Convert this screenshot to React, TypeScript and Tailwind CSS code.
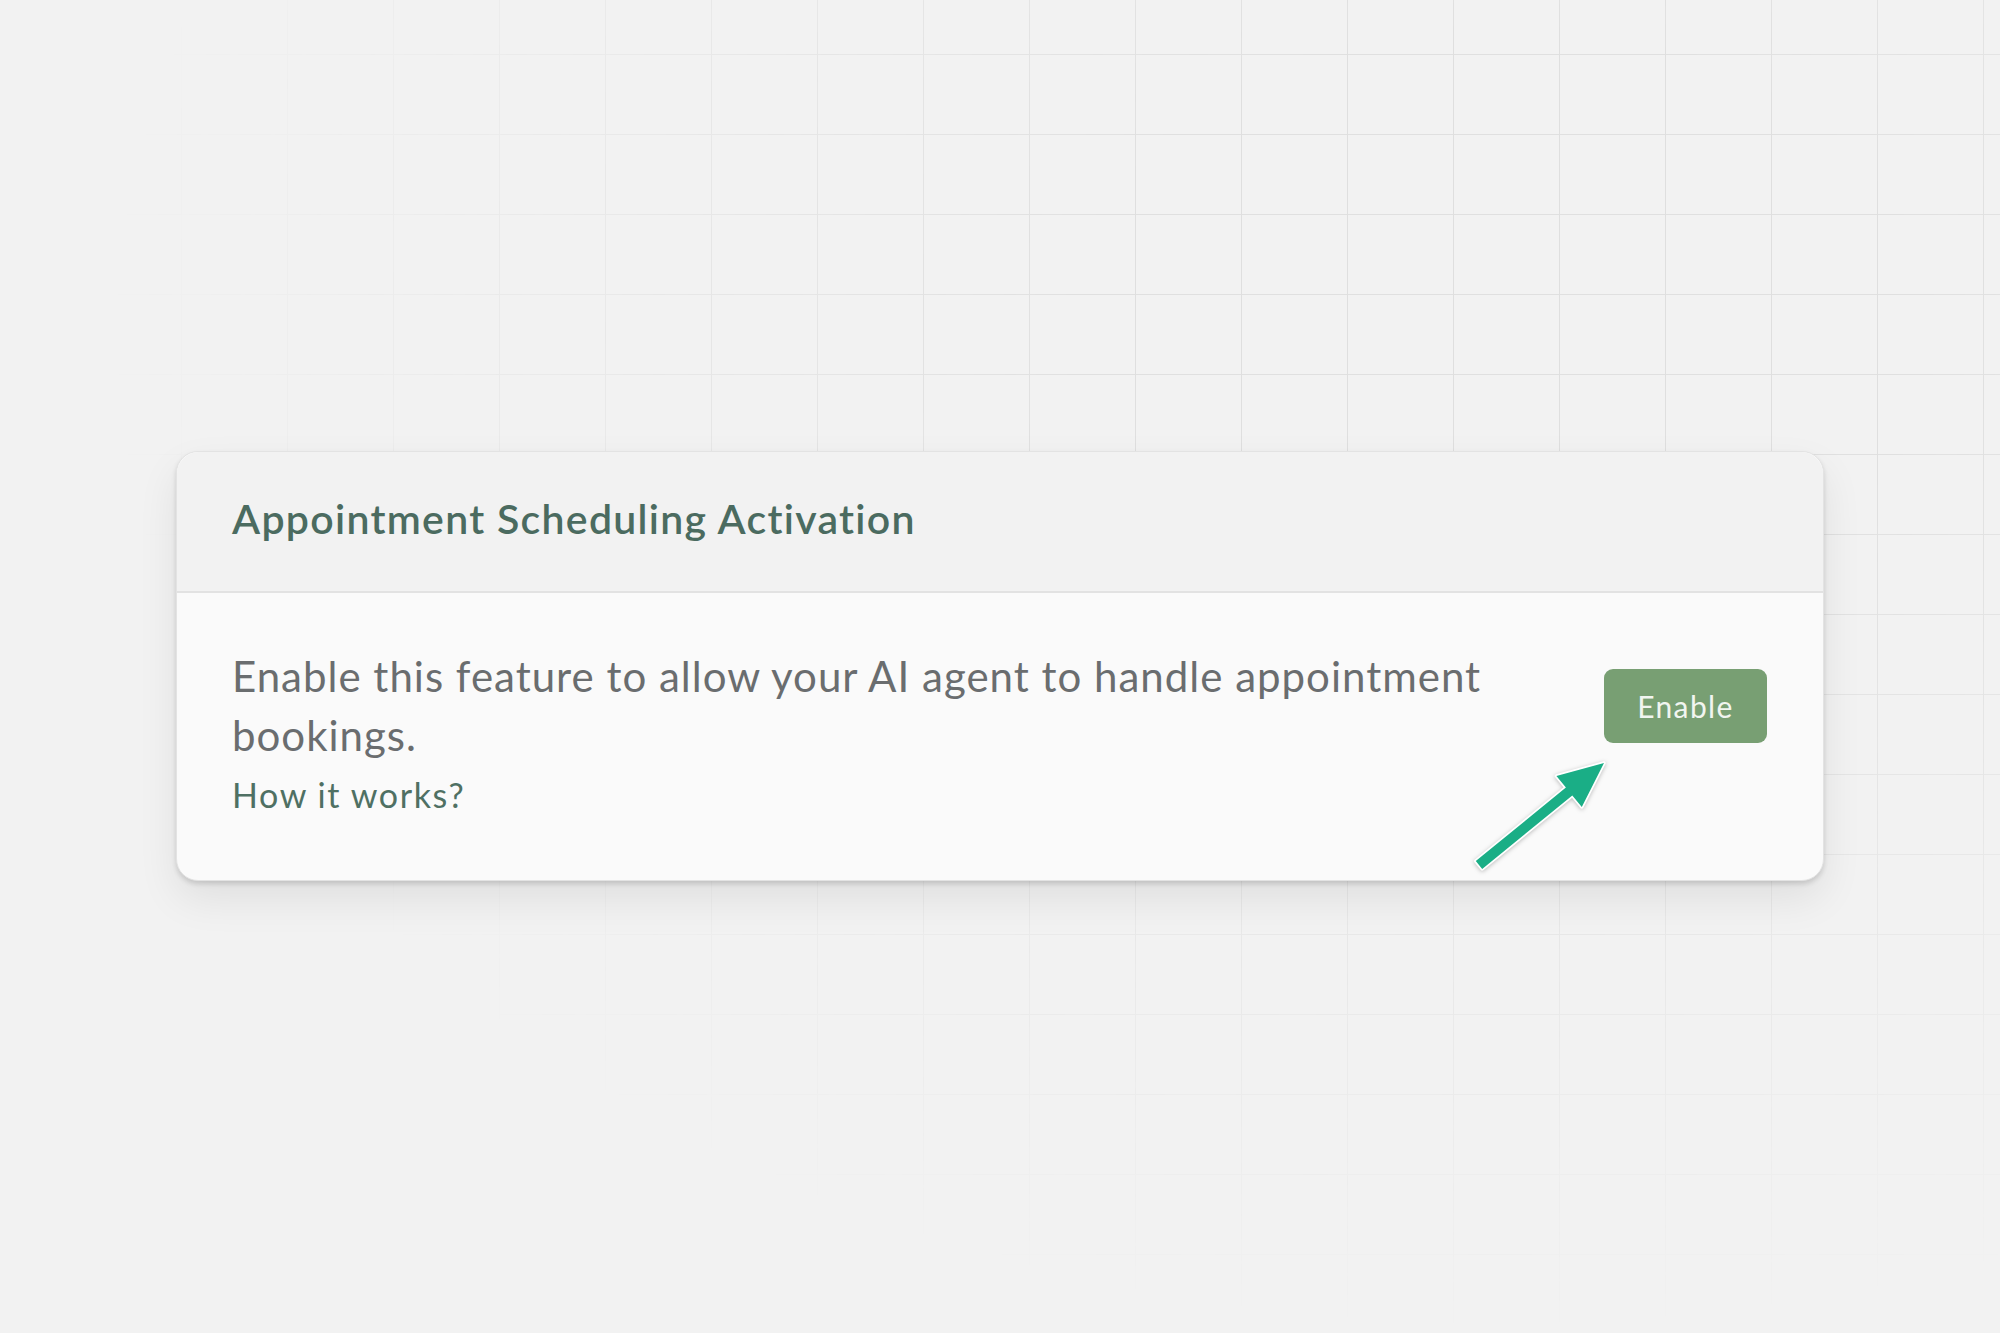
import React from "react";

function PointerArrow() {
  // green callout arrow pointing at the Enable button
  return (
    <svg
      className="absolute left-[1284px] top-[294px] pointer-events-none drop-shadow-[0_1px_2px_rgba(0,0,0,0.25)]"
      width="160"
      height="135"
      viewBox="0 0 160 135"
    >
      <polygon
        points="14.8,115.1 104.9,41.6 95.4,30 143,17 120.8,61 111.3,49.4 21.2,122.9"
        fill="#1aae86"
        stroke="#ffffff"
        strokeWidth="3.5"
        strokeLinejoin="round"
        paintOrder="stroke"
      />
    </svg>
  );
}

export default function App() {
  return (
    <div className="relative min-h-[1333px] w-full overflow-hidden bg-[#f2f2f2] font-['Lato',sans-serif]">
      {/* faint grid backdrop */}
      <div className="absolute inset-0 bg-[linear-gradient(to_right,#dfdfdf_1px,transparent_1px),linear-gradient(to_bottom,#e0e0e0_1px,transparent_1px)] bg-[size:106px_80px] bg-[position:75px_54px] [mask-image:radial-gradient(ellipse_70%_75%_at_75%_25%,black_30%,transparent_100%)]" />

      <div className="relative pt-[451px] pl-[176px]">
        <div className="relative w-[1648px] rounded-[22px] border border-[#e3e3e3] bg-[#fafafa] shadow-[0_3px_5px_rgba(0,0,0,0.14),0_18px_40px_rgba(0,0,0,0.08)]">
          <div className="flex h-[141px] items-center rounded-t-[22px] border-b-2 border-[#e2e2e2] bg-[#f2f2f2] px-[55px] pb-[6px]">
            <h2 className="text-[41px] font-semibold tracking-[1.3px] text-[#4b6b60]">
              Appointment Scheduling Activation
            </h2>
          </div>

          <div className="flex items-start justify-between gap-10 pt-[54px] pb-[56px] pl-[55px] pr-[56px]">
            <div className="max-w-[1300px]">
              <p className="text-[42px] leading-[59px] tracking-[1px] text-[#6a6d6f]">
                Enable this feature to allow your AI agent to handle appointment bookings.
              </p>
              <a href="#" className="block text-[34px] leading-[59px] tracking-[1.6px] text-[#4f7063]">
                How it works?
              </a>
            </div>
            <button className="mt-[22px] h-[74px] w-[163px] shrink-0 rounded-[9px] bg-[#789f73] text-[30px] tracking-[1.4px] text-[#f1f5f0]">
              Enable
            </button>
          </div>

          <PointerArrow />
        </div>
      </div>
    </div>
  );
}
